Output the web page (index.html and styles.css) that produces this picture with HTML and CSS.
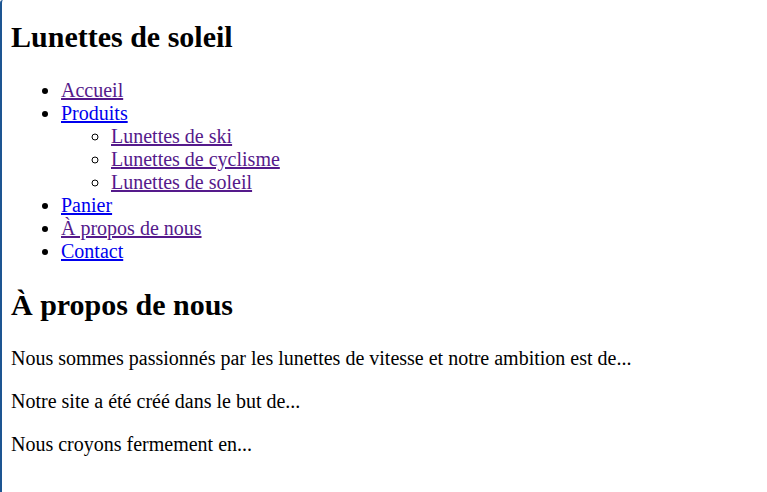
FILE: index.html
```html
<!DOCTYPE html>
<html lang="fr">
<head>
<meta charset="utf-8">
<title>Lunettes de soleil</title>
<link rel="stylesheet" href="styles.css">
</head>
<body class="body">
<div class="page">
  <header>
    <h1 class="site-title">Lunettes de soleil</h1>
    <nav>
      <ul class="menu">
        <li><a class="link visited" href="#">Accueil</a></li>
        <li><a class="link" href="#">Produits</a>
          <ul class="submenu">
            <li><a class="link visited" href="#">Lunettes de ski</a></li>
            <li><a class="link visited" href="#">Lunettes de cyclisme</a></li>
            <li><a class="link visited" href="#">Lunettes de soleil</a></li>
          </ul>
        </li>
        <li><a class="link" href="#">Panier</a></li>
        <li><a class="link visited" href="#">À propos de nous</a></li>
        <li><a class="link" href="#">Contact</a></li>
      </ul>
    </nav>
  </header>
  <main>
    <h2 class="section-title">À propos de nous</h2>
    <p class="text">Nous sommes passionnés par les lunettes de vitesse et notre ambition est de...</p>
    <p class="text">Notre site a été créé dans le but de...</p>
    <p class="text">Nous croyons fermement en...</p>
  </main>
</div>
</body>
</html>
```

FILE: styles.css
```css
html, .body {
  margin: 0;
  padding: 0;
  background: #ffffff;
}

.body {
  font-family: "Liberation Serif", "Times New Roman", serif;
  font-size: 20px;
  color: #000000;
}

.page {
  display: flow-root;
  min-height: 100vh;
  box-sizing: border-box;
  border-left: 2px solid #1d5592;
  border-top-left-radius: 3px;
  padding: 0 8px 0 9px;
}

.site-title {
  font-size: 30px;
  font-weight: bold;
  margin: 20px 0 25px;
}

.menu {
  list-style: disc;
  margin: 0;
  padding-left: 50px;
}

.submenu {
  list-style: circle;
  margin: 0;
  padding-left: 50px;
}

.link {
  color: #0000ee;
  text-decoration: underline;
}

.link.visited {
  color: #551a8b;
}

.section-title {
  font-size: 30px;
  font-weight: bold;
  margin: 25px 0 25px;
}

.text {
  margin: 20px 0;
}
```
